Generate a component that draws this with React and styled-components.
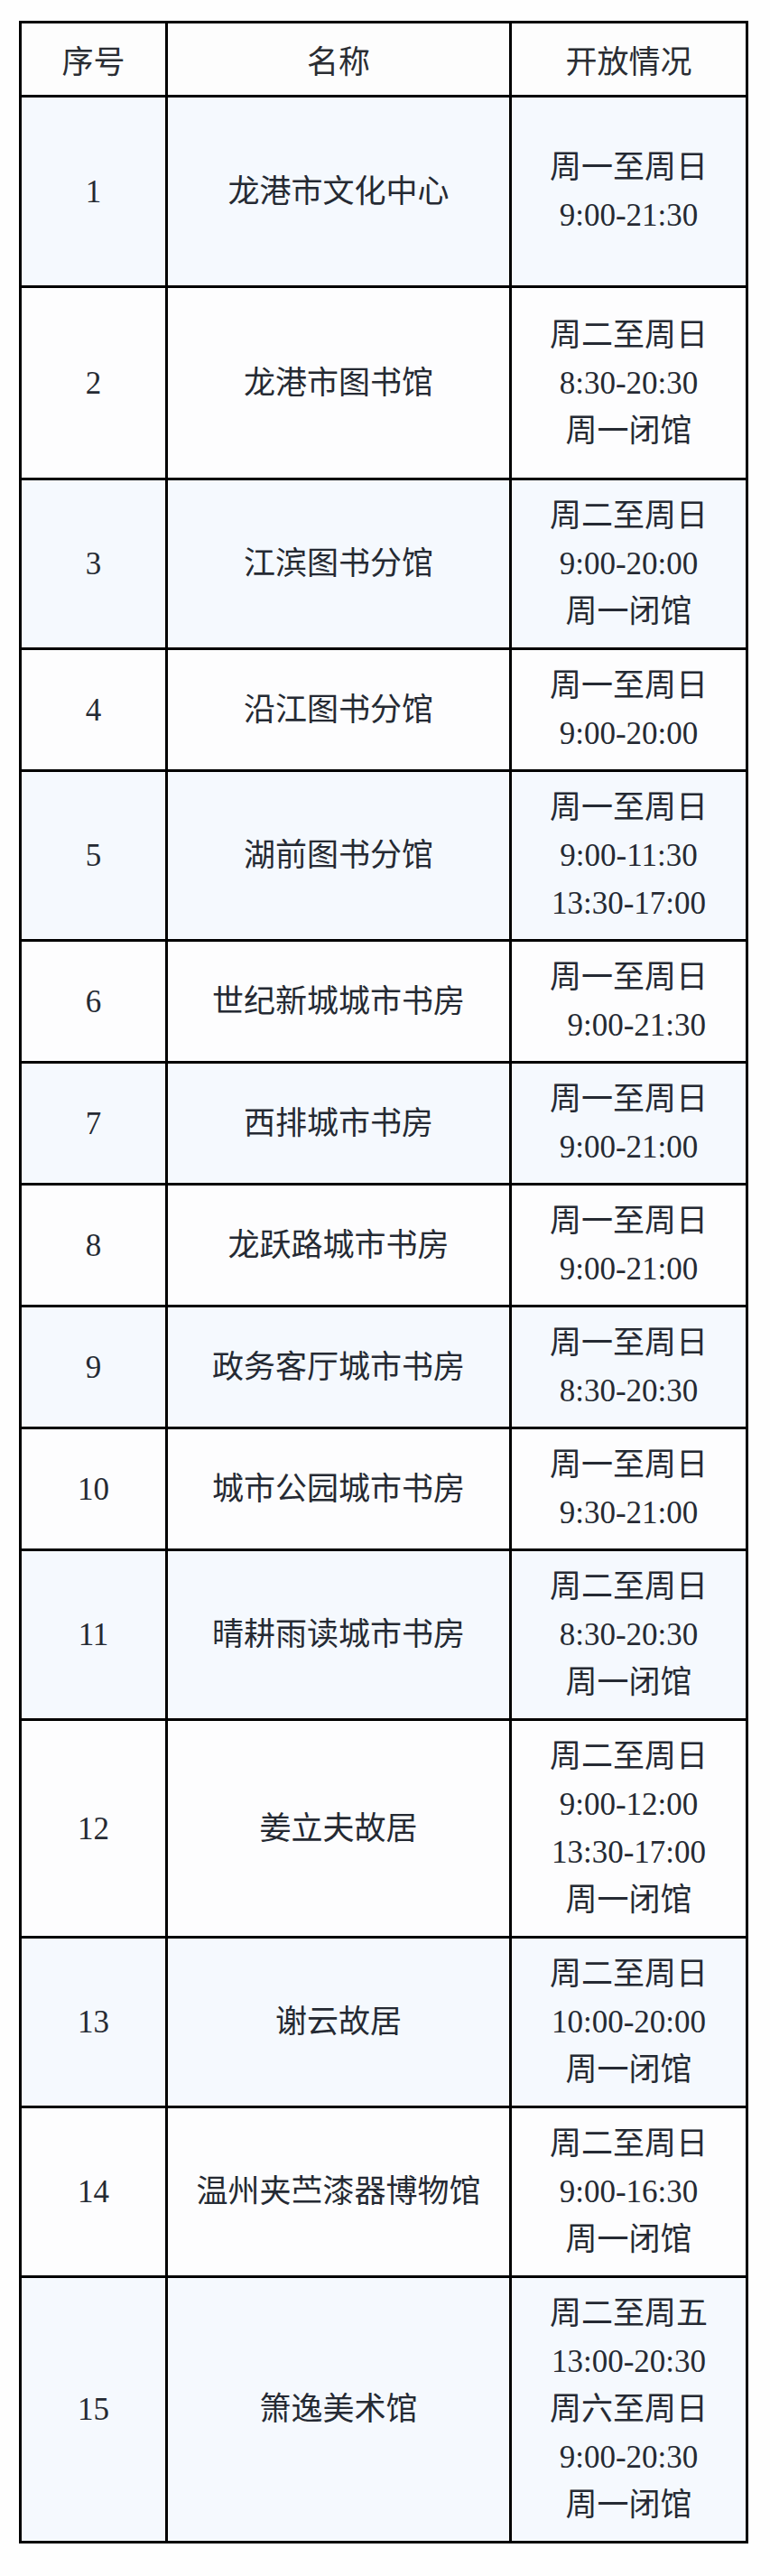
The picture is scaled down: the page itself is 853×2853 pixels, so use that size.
import React from "react";
import styled, { createGlobalStyle } from "styled-components";

const GlobalStyle = createGlobalStyle`
  html, body {
    margin: 0;
    padding: 0;
    background: #fefefe;
  }
  body {
    font-family: "Liberation Serif", "Noto Sans CJK SC", serif;
    color: #252a33;
  }
`;

const Page = styled.div`
  padding: 23px 0 34px 21px;
`;

const Table = styled.div`
  display: grid;
  grid-template-columns: 159px 378px 259px;
  gap: 3px;
  padding: 3px;
  background: #000;
  width: max-content;
`;

const Cell = styled.div`
  display: flex;
  flex-direction: column;
  align-items: center;
  justify-content: center;
  text-align: center;
  box-sizing: border-box;
  padding: 13px 4px;
  font-size: 35px;
  line-height: 53px;
  min-height: ${(p) => p.$h || 0}px;
  background: ${(p) => (p.$tint ? "#f5f9fe" : "#fdfdfe")};
  white-space: nowrap;
`;

const HeadCell = styled(Cell)`
  font-family: "Noto Sans CJK SC", sans-serif;
  color: #2a2d33;
  background: #fdfdfd;
`;

const Line = styled.span`
  display: block;
`;

const rows = [
  ["龙港市文化中心", ["周一至周日", "9:00-21:30"], 208],
  ["龙港市图书馆", ["周二至周日", "8:30-20:30", "周一闭馆"], 210],
  ["江滨图书分馆", ["周二至周日", "9:00-20:00", "周一闭馆"]],
  ["沿江图书分馆", ["周一至周日", "9:00-20:00"]],
  ["湖前图书分馆", ["周一至周日", "9:00-11:30", "13:30-17:00"]],
  ["世纪新城城市书房", ["周一至周日", "\u20029:00-21:30"]],
  ["西排城市书房", ["周一至周日", "9:00-21:00"]],
  ["龙跃路城市书房", ["周一至周日", "9:00-21:00"]],
  ["政务客厅城市书房", ["周一至周日", "8:30-20:30"]],
  ["城市公园城市书房", ["周一至周日", "9:30-21:00"]],
  ["晴耕雨读城市书房", ["周二至周日", "8:30-20:30", "周一闭馆"]],
  ["姜立夫故居", ["周二至周日", "9:00-12:00", "13:30-17:00", "周一闭馆"]],
  ["谢云故居", ["周二至周日", "10:00-20:00", "周一闭馆"]],
  ["温州夹苎漆器博物馆", ["周二至周日", "9:00-16:30", "周一闭馆"]],
  ["箫逸美术馆", ["周二至周五", "13:00-20:30", "周六至周日", "9:00-20:30", "周一闭馆"]],
];

export default function App() {
  return (
    <>
      <GlobalStyle />
      <Page>
        <Table>
          <HeadCell>序号</HeadCell>
          <HeadCell>名称</HeadCell>
          <HeadCell>开放情况</HeadCell>
          {rows.map(([name, hours, h], i) => {
            const tint = i % 2 === 0;
            return (
              <React.Fragment key={i}>
                <Cell $tint={tint} $h={h}>{i + 1}</Cell>
                <Cell $tint={tint} $h={h}>{name}</Cell>
                <Cell $tint={tint} $h={h}>
                  {hours.map((t, j) => (
                    <Line key={j}>{t}</Line>
                  ))}
                </Cell>
              </React.Fragment>
            );
          })}
        </Table>
      </Page>
    </>
  );
}
